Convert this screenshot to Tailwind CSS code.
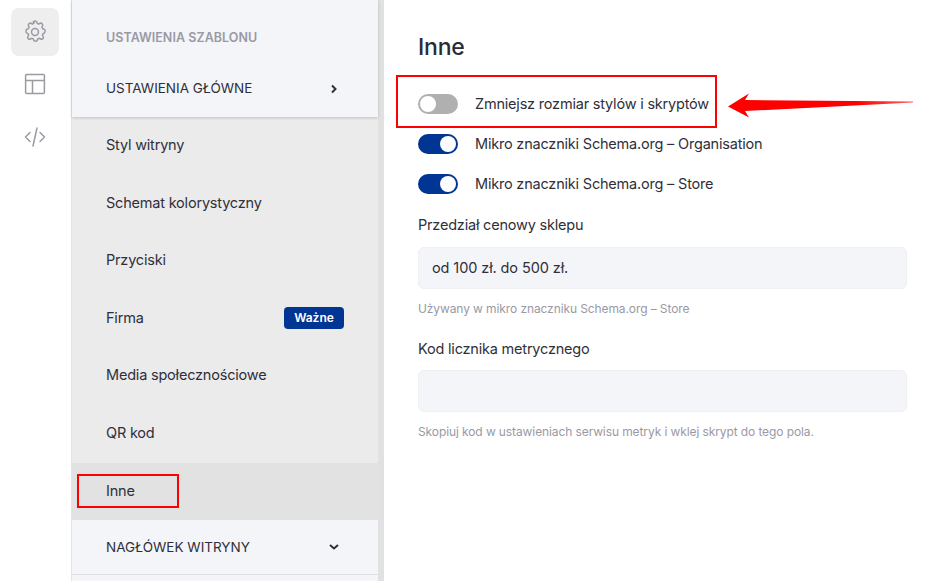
<!DOCTYPE html>
<html lang="pl">
<head>
<meta charset="utf-8">
<script src="https://cdn.jsdelivr.net/npm/@tailwindcss/browser@4"></script>
</head>
<body class="m-0 bg-white font-['Inter',sans-serif] text-[#2f2f3a]">
<div class="relative flex h-[581px] w-[940px] overflow-hidden">
  <!-- rail -->
  <nav class="flex w-[72px] shrink-0 flex-col items-center gap-1 border-r border-[#e4e4e7] pt-2 pr-[1px]">
    <div class="flex h-12 w-12 items-center justify-center rounded-lg bg-[#eeeeee]">
      <svg class="h-[26px] w-[26px]" viewBox="0 0 24 24" fill="none" stroke="#9b9aa3" stroke-width="1.400" stroke-linecap="round" stroke-linejoin="round"><path d="M10.300 2.800c.4-1.400 3-1.400 3.400 0a1.700 1.700 0 0 0 2.800 1.300c1.300-1 3.400 1 2.400 2.400a1.700 1.700 0 0 0 1.300 2.800c1.500.4 1.500 3.400 0 3.800a1.700 1.700 0 0 0-.7 2.900c1 1.400-1 3.500-2.400 2.400a1.700 1.700 0 0 0-2.900 1c-.4 1.500-3 1.500-3.400 0a1.700 1.700 0 0 0-2.900-1c-1.400 1.100-3.400-1-2.400-2.400a1.700 1.700 0 0 0-.7-2.900c-1.500-.4-1.500-3.400 0-3.800a1.700 1.700 0 0 0 1.300-2.800c-1-1.400 1.100-3.400 2.400-2.400a1.700 1.700 0 0 0 2.800-1.300z"/><circle cx="12" cy="12" r="3.200"/></svg>
    </div>
    <div class="flex h-12 w-12 items-center justify-center">
      <svg class="h-6 w-6" viewBox="0 0 24 24" fill="none" stroke="#9b9aa3" stroke-width="1.500" stroke-linejoin="round"><rect x="2.600" y="2.600" width="18.800" height="18.800" rx="1"/><path d="M2.600 8.500h18.800M9.500 8.500v12.900"/></svg>
    </div>
    <div class="mt-[1px] flex h-12 w-12 items-center justify-center">
      <svg class="h-6 w-6" viewBox="0 0 24 24" fill="none" stroke="#9b9aa3" stroke-width="1.500" stroke-linecap="round" stroke-linejoin="round"><path d="M7 7.500 2.500 12 7 16.500M17 7.500l4.500 4.500-4.500 4.500M14 3l-4 18"/></svg>
    </div>
  </nav>

  <!-- sidebar -->
  <aside class="flex w-[306px] shrink-0 flex-col bg-[#ebebec]">
    <div class="relative h-[117px] bg-[#f4f5f8] shadow-[0_1px_3px_rgba(0,0,0,0.18)]">
      <div class="flex h-[75px] items-center pl-[34px] pt-[1px] text-[12.500px] font-semibold tracking-[0.05px] text-[#9a99a4]">USTAWIENIA SZABLONU</div>
      <div class="flex h-[27px] items-center justify-between pl-[34px] pr-[38px] text-[13.500px]">
        <span>USTAWIENIA GŁÓWNE</span>
        <svg class="h-3 w-3" viewBox="0 0 12 12" fill="none" stroke="#2f2f3a" stroke-width="2"><path d="m4 2.500 3.500 3.500L4 9.500"/></svg>
      </div>
    </div>
    <div class="flex h-[57.600px] items-center pb-[2px] pl-[34px] text-[14.500px] tracking-[-0.2px]">Styl witryny</div>
    <div class="flex h-[57.600px] items-center pb-[2px] pl-[34px] text-[14.500px] tracking-[-0.2px]">Schemat kolorystyczny</div>
    <div class="flex h-[57.600px] items-center pb-[2px] pl-[34px] text-[14.500px] tracking-[-0.2px]">Przyciski</div>
    <div class="flex h-[57.600px] items-center justify-between pb-[2px] pl-[34px] pr-[34px] text-[14.500px] tracking-[-0.2px]">
      <span>Firma</span>
      <span class="flex h-[22px] w-[60px] items-center justify-center rounded-[4px] bg-[#003594] text-[12px] font-semibold tracking-normal text-white">Ważne</span>
    </div>
    <div class="flex h-[57.600px] items-center pb-[2px] pl-[34px] text-[14.500px] tracking-[-0.2px]">Media społecznościowe</div>
    <div class="flex h-[57.600px] items-center pb-[2px] pl-[34px] text-[14.500px] tracking-[-0.2px]">QR kod</div>
    <div class="flex h-[57px] items-center bg-[#e2e2e2] pl-[34px] text-[14.500px] tracking-[-0.2px]">Inne</div>
    <div class="flex h-[55px] items-center justify-between border-b border-[#e0e0e3] bg-[#f4f5f8] pl-[34px] pr-[38px] pt-[1px] text-[13.500px]">
      <span>NAGŁÓWEK WITRYNY</span>
      <svg class="h-3 w-3" viewBox="0 0 12 12" fill="none" stroke="#2f2f3a" stroke-width="2"><path d="M2 4l4 3.500L10 4"/></svg>
    </div>
    <div class="flex-1 bg-[#f4f5f8]"></div>
  </aside>
  <div class="w-[6px] shrink-0 bg-[#e1e1e1]"></div>

  <!-- main -->
  <main class="flex-1 pl-[34px] pr-[33px]">
    <h1 class="mt-[33px] text-[23px] leading-[28px] font-medium tracking-[-0.2px] text-[#2b2b35]">Inne</h1>
    <div class="mt-[23px] flex h-[40px] items-center gap-[17px] text-[14.500px] tracking-[-0.2px]">
      <span class="flex h-5 w-10 items-center rounded-full bg-[#b0b0b0] p-[2px]"><span class="h-4 w-4 rounded-full bg-white"></span></span>
      <span>Zmniejsz rozmiar stylów i skryptów</span>
    </div>
    <div class="flex h-[40px] items-center gap-[17px] text-[14.500px] tracking-[-0.2px]">
      <span class="flex h-5 w-10 items-center justify-end rounded-full bg-[#003594] p-[2px]"><span class="h-4 w-4 rounded-full bg-white"></span></span>
      <span>Mikro znaczniki Schema.org – Organisation</span>
    </div>
    <div class="flex h-[40px] items-center gap-[17px] text-[14.500px] tracking-[-0.2px]">
      <span class="flex h-5 w-10 items-center justify-end rounded-full bg-[#003594] p-[2px]"><span class="h-4 w-4 rounded-full bg-white"></span></span>
      <span>Mikro znaczniki Schema.org – Store</span>
    </div>
    <div class="mt-[10px] text-[14.500px] leading-[22px] tracking-[-0.2px]">Przedział cenowy sklepu</div>
    <div class="mt-[11px] flex h-[42px] items-center rounded-md border border-[#f0f0f3] bg-[#f4f5f8] pl-[13px] text-[14.500px] tracking-[-0.1px]">od 100 zł. do 500 zł.</div>
    <div class="mt-[11px] text-[12px] leading-[18px] tracking-[-0.1px] text-[#9a99a4]">Używany w mikro znaczniku Schema.org – Store</div>
    <div class="mt-[20px] text-[14.500px] leading-[22px] tracking-[-0.2px]">Kod licznika metrycznego</div>
    <div class="mt-[10px] h-[42px] rounded-md border border-[#f0f0f3] bg-[#f4f5f8]"></div>
    <div class="mt-[11px] text-[12px] leading-[18px] tracking-[-0.1px] text-[#9a99a4]">Skopiuj kod w ustawieniach serwisu metryk i wklej skrypt do tego pola.</div>
  </main>

  <!-- annotations -->
  <div class="absolute left-[396px] top-[75px] h-[53px] w-[321px] border-2 border-[#ff0000]"></div>
  <div class="absolute left-[77px] top-[474px] h-[34px] w-[102px] border-2 border-[#ff0000]"></div>
  <svg class="absolute left-[726px] top-[90px]" width="190" height="30" viewBox="0 0 190 30"><defs><linearGradient id="a" x1="0" x2="1" y1="0" y2="0"><stop offset="0.7" stop-color="#ff0000"/><stop offset="1" stop-color="#ff6060"/></linearGradient></defs><path d="M2 16.500 L23 3.500 L19 10 L187 11.500 L187 12.500 L19 21 L23 27.500 Z" fill="url(#a)"/></svg>
</div>
</body>
</html>
